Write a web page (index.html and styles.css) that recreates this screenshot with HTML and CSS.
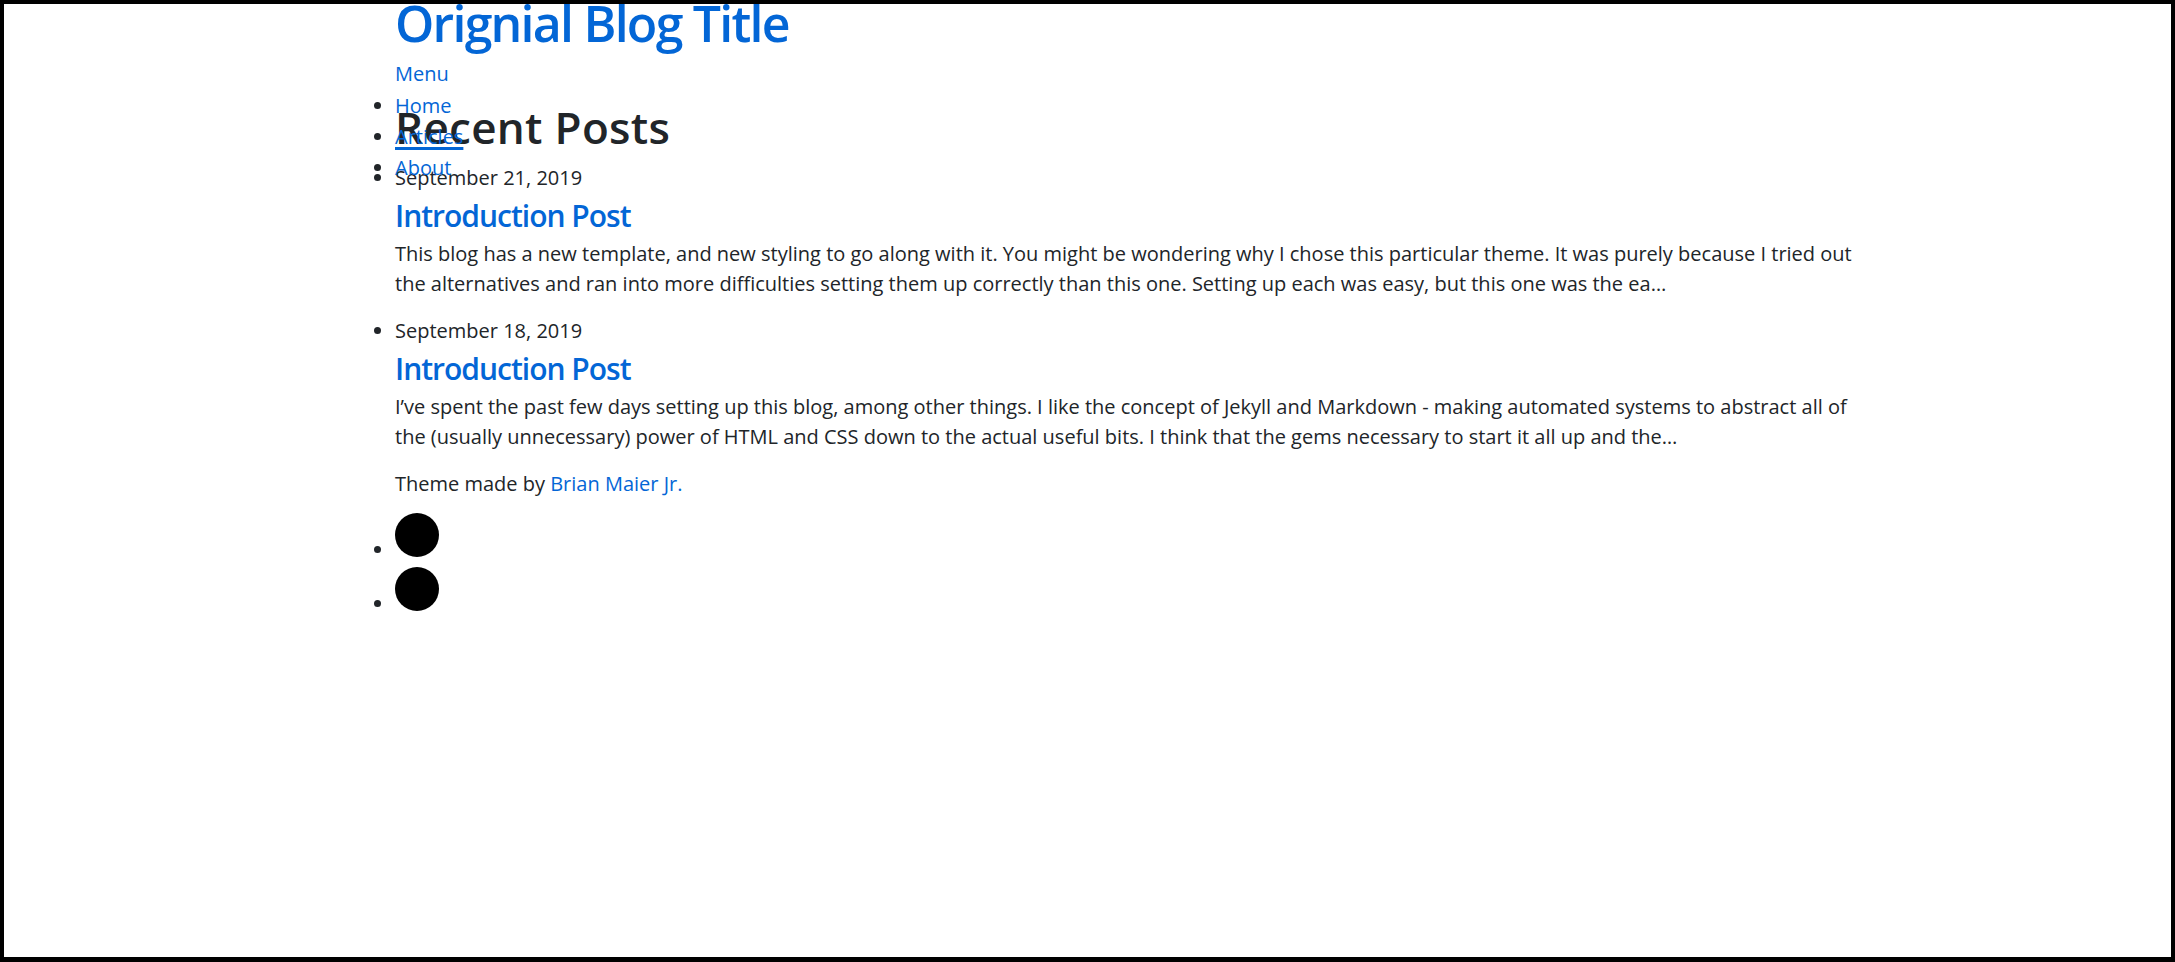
FILE: index.html
```html
<!DOCTYPE html>
<html lang="en">
<head>
<meta charset="utf-8">
<title>Orignial Blog Title</title>
<link rel="stylesheet" href="styles.css">
</head>
<body>
<div class="page">
  <header class="site-header">
    <h1 class="site-title"><a href="#">Orignial Blog Title</a></h1>
    <nav class="site-nav">
      <a class="menu-toggle" href="#">Menu</a>
      <ul class="nav-list">
        <li><a href="#">Home</a></li>
        <li><a class="active" href="#">Articles</a></li>
        <li><a href="#">About</a></li>
      </ul>
    </nav>
  </header>
  <main class="content">
    <h2 class="section-title">Recent Posts</h2>
    <ul class="post-list">
      <li class="post">
        <span class="post-date">September 21, 2019</span>
        <h3 class="post-title"><a href="#">Introduction Post</a></h3>
        <p class="post-excerpt">This blog has a new template, and new styling to go along with it. You might be wondering why I chose this particular theme. It was purely because I tried out the alternatives and ran into more difficulties setting them up correctly than this one. Setting up each was easy, but this one was the ea…</p>
      </li>
      <li class="post">
        <span class="post-date">September 18, 2019</span>
        <h3 class="post-title"><a href="#">Introduction Post</a></h3>
        <p class="post-excerpt">I’ve spent the past few days setting up this blog, among other things. I like the concept of Jekyll and Markdown - making automated systems to abstract all of the (usually unnecessary) power of HTML and CSS down to the actual useful bits. I think that the gems necessary to start it all up and the…</p>
      </li>
    </ul>
  </main>
  <footer class="site-footer">
    <p class="credit">Theme made by <a href="#">Brian Maier Jr.</a></p>
    <ul class="social">
      <li><a href="#"><svg class="social-icon" width="44" height="44" viewBox="0 0 44 44"><circle cx="22" cy="22" r="22"/></svg></a></li>
      <li><a href="#"><svg class="social-icon" width="44" height="44" viewBox="0 0 44 44"><circle cx="22" cy="22" r="22"/></svg></a></li>
    </ul>
  </footer>
</div>
</body>
</html>
```
FILE: styles.css
```css
html, body {
  margin: 0;
  padding: 0;
}

body {
  height: 962px;
  box-sizing: border-box;
  border: 4px solid #000;
  border-bottom-width: 5px;
  overflow: hidden;
  background: #fff;
  color: #212529;
  font-family: "Open Sans", "Noto Sans", sans-serif;
  font-size: 20px;
  line-height: 30px;
  letter-spacing: 0;
}

a {
  color: #0366d6;
  text-decoration: none;
}

.page {
  margin-left: 391px;
  width: 1470px;
}

.site-title {
  margin: -11px 0 6px;
  font-size: 50px;
  line-height: 60px;
  font-weight: 600;
  letter-spacing: -1.75px;
}

.site-nav {
  position: relative;
}

.menu-toggle {
  display: block;
}

.nav-list {
  position: absolute;
  top: 31px;
  left: 0;
  margin: 0;
  padding: 0;
  list-style: disc outside;
  line-height: 31px;
}

.nav-list .active {
  text-decoration: underline;
  text-decoration-thickness: 3px;
  text-underline-offset: 3px;
}

.section-title {
  margin: 12px 0 9px;
  font-size: 44px;
  line-height: 53px;
  font-weight: 600;
  letter-spacing: 0.3px;
}

.post-list,
.social {
  margin: 0;
  padding: 0;
  list-style: disc outside;
}

.post-date {
  display: block;
}

.post-title {
  margin: 5px 0 5px;
  font-size: 30px;
  line-height: 36px;
  font-weight: 600;
  letter-spacing: -1px;
}

.post-excerpt {
  margin: 0 0 17px;
}

.credit {
  margin: 0 0 14px;
}

.social li {
  padding-bottom: 2px;
}

.social-icon {
  fill: #000;
  vertical-align: baseline;
}
```
